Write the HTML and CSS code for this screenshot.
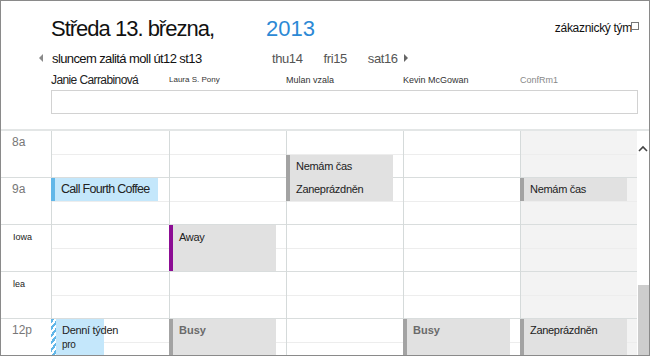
FILE: index.html
```html
<!DOCTYPE html>
<html lang="cs">
<head>
  <meta charset="UTF-8" />
  <meta name="viewport" content="width=device-width, initial-scale=1.0">
  <title>Kalendář týmu</title>
  <link rel="stylesheet" href="styles.css">
</head>
<body>
  <div class="frame">
    <header class="head">
      <div class="title-row">
        <h1 class="date">Středa 13. března,</h1>
        <span class="year">2013</span>
        <span class="team">zákaznický tým<span class="pop"></span></span>
      </div>

      <div class="nav-row">
        <span class="arrow left"></span>
        <span class="week">sluncem zalitá moll út12 st13</span>
        <span class="day">thu14</span>
        <span class="day">fri15</span>
        <span class="day last">sat16</span>
        <span class="arrow right"></span>
      </div>

      <div class="people">
        <span class="p-janie">Janie Carrabinová</span>
        <span class="p-laura">Laura S. Pony</span>
        <span class="p-mulan">Mulan vzala</span>
        <span class="p-kevin">Kevin McGowan</span>
        <span class="p-room">ConfRm1</span>
      </div>

      <div class="search"></div>
    </header>

    <div class="schedule">
      <div class="times">
        <div class="hour"><span class="t-big">8a</span></div>
        <div class="hour"><span class="t-big">9a</span></div>
        <div class="hour"><span class="t-small">Iowa</span></div>
        <div class="hour"><span class="t-small">lea</span></div>
        <div class="hour"><span class="t-big">12p</span></div>
      </div>

      <!-- Janie -->
      <div class="col first">
        <div class="event blue coffee">Call Fourth Coffee</div>
        <div class="event blue tentative">
          <span>Denní týden</span>
          <span class="sub">pro</span>
        </div>
      </div>

      <!-- Laura -->
      <div class="col">
        <div class="event gray away">Away</div>
        <div class="event gray busy noon">Busy</div>
      </div>

      <!-- Mulan -->
      <div class="col">
        <div class="event gray r2">Nemám čas</div>
        <div class="event gray r3">Zaneprázdněn</div>
      </div>

      <!-- Kevin -->
      <div class="col">
        <div class="event gray busy noon">Busy</div>
      </div>

      <!-- ConfRm1 -->
      <div class="col room">
        <div class="event gray r3">Nemám čas</div>
        <div class="event gray noon">Zaneprázdněn</div>
      </div>

      <div class="scroll">
        <svg class="up" width="10" height="7" viewBox="0 0 10 7">
          <path d="M1 6 L5 2 L9 6" fill="none" stroke="#444" stroke-width="1.6"/>
        </svg>
        <div class="thumb"></div>
      </div>
    </div>
  </div>
</body>
</html>
```

FILE: styles.css
```css
    body {
      margin: 0;
      background: #fff;
      font-family: "Liberation Sans", Arial, sans-serif;
      color: #222;
    }
    .frame {
      width: 650px;
      height: 356px;
      box-sizing: border-box;
      border: 1px solid #8a8a8a;
      overflow: hidden;
    }

    /* header */
    .head {
      height: 128px;
      border-bottom: 2px solid #e3e6e6;
      box-sizing: content-box;
    }
    .title-row {
      display: flex;
      align-items: flex-start;
      padding: 14px 11px 0 50px;
      height: 28px;
    }
    .date {
      margin: 0;
      width: 215px;
      font-size: 22px;
      font-weight: normal;
      line-height: 28px;
      letter-spacing: -1px;
      color: #111;
    }
    .year {
      font-size: 22px;
      line-height: 28px;
      color: #2c89d5;
    }
    .team {
      margin-left: auto;
      margin-top: 5px;
      font-size: 12px;
      line-height: 16px;
      letter-spacing: -0.3px;
      color: #111;
      position: relative;
      padding-right: 6px;
    }
    .pop {
      position: absolute;
      right: -1px;
      top: 2px;
      width: 6px;
      height: 6px;
      border: 1px solid #777;
      background: #fff;
    }

    .nav-row {
      display: flex;
      align-items: center;
      height: 18px;
      margin-top: 6px;
      padding-left: 38px;
      font-size: 13px;
      letter-spacing: -0.4px;
    }
    .arrow {
      width: 0;
      height: 0;
      border-top: 4px solid transparent;
      border-bottom: 4px solid transparent;
    }
    .arrow.left {
      border-right: 4px solid #8a8a8a;
      margin-right: 9px;
    }
    .arrow.right {
      border-left: 4px solid #666;
      margin-left: 6px;
    }
    .week {
      width: 220px;
      color: #111;
      letter-spacing: -0.6px;
    }
    .day {
      color: #555;
      margin-right: 21px;
    }
    .day.last {
      margin-right: 0;
    }

    .people {
      display: grid;
      grid-template-columns: 118px 117px 117px 117px 117px;
      align-items: end;
      height: 14px;
      margin-top: 6px;
      padding-left: 50px;
      line-height: 14px;
    }
    .p-janie { font-size: 12px; color: #222; letter-spacing: -0.6px; }
    .p-laura { font-size: 8px; color: #333; }
    .p-mulan { font-size: 9px; color: #333; }
    .p-kevin { font-size: 9px; color: #333; }
    .p-room  { font-size: 9px; color: #888; }

    .search {
      margin: 3px 11px 0 50px;
      height: 22px;
      border: 1px solid #d2d2d2;
    }

    /* schedule grid */
    .schedule {
      display: flex;
      height: 226px;
    }
    .times {
      width: 50px;
      flex: none;
    }
    .hour {
      height: 47px;
      box-sizing: border-box;
      border-bottom: 1px solid #d9dddd;
      padding: 1px 0 0 11px;
    }
    .t-big {
      font-size: 12px;
      color: #777;
    }
    .t-small {
      font-size: 9px;
      color: #222;
      padding-left: 1px;
      line-height: 20px;
    }

    .col {
      width: 116px;
      flex: none;
      border-left: 1px solid #d5dada;
      display: grid;
      grid-template-rows: repeat(5, 23px 24px);
      align-content: start;
      background: repeating-linear-gradient(to bottom,
        transparent 0 23px, #ededed 23px 24px,
        transparent 24px 46px, #d9dddd 46px 47px);
    }
    .col.first {
      width: 117px;
    }
    .col.room {
      background-color: #f3f3f3;
    }

    .event {
      width: 103px;
      box-sizing: content-box;
      border-left: 4px solid #a3a3a3;
      font-size: 11px;
      line-height: 23px;
      letter-spacing: -0.3px;
      padding-left: 6px;
      margin-left: -1px;
      overflow: hidden;
      white-space: nowrap;
    }
    .event.gray {
      background: #e1e1e1;
      color: #222;
      width: 97px;
    }
    .event.blue {
      background: #c4e7fb;
      border-left-color: #62b7e8;
    }
    .r2 {
      grid-row: 2;
      margin-top: 1px;
    }
    .r3 {
      grid-row: 3;
    }
    .event.coffee {
      grid-row: 3;
      width: 97px;
      font-size: 12.5px;
      letter-spacing: -0.7px;
    }
    .event.away {
      grid-row: 5 / span 2;
      margin-bottom: 1px;
      border-left-color: #8c0d94;
      line-height: 16px;
      padding-top: 4px;
    }
    .noon {
      grid-row: 9 / span 2;
      line-height: 16px;
      padding-top: 3px;
    }
    .event.busy {
      font-weight: bold;
      color: #6a6a6a;
      letter-spacing: 0;
    }
    .event.tentative {
      grid-row: 9 / span 2;
      width: 42px;
      border-left: 5px solid transparent;
      border-image: repeating-linear-gradient(135deg, #62b7e8 0 2px, #fff 2px 4px) 5;
      line-height: 16px;
      padding-top: 3px;
      display: flex;
      flex-direction: column;
      white-space: nowrap;
      overflow: visible;
    }
    .tentative .sub {
      font-size: 10px;
      line-height: 14px;
    }

    .scroll {
      flex: 1;
      position: relative;
      background: #fff;
    }
    .up {
      display: block;
      margin: 14px 0 0 1px;
    }
    .thumb {
      position: absolute;
      left: 1px;
      right: 0;
      top: 154px;
      bottom: 0;
      background: #cdcdcd;
    }
```
